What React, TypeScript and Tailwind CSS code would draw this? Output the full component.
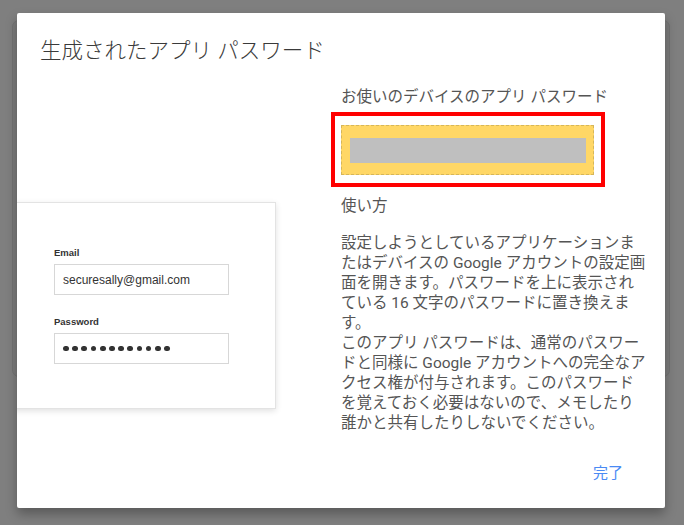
export default function App() {
  const lines1 = [
    "設定しようとしているアプリケーションま",
    "たはデバイスの Google アカウントの設定画",
    "面を開きます。パスワードを上に表示され",
    "ている 16 文字のパスワードに置き換えま",
    "す。",
    "このアプリ パスワードは、通常のパスワー",
    "ドと同様に Google アカウントへの完全なア",
    "クセス権が付与されます。このパスワード",
    "を覚えておく必要はないので、メモしたり",
    "誰かと共有したりしないでください。",
  ];
  return (
    <div className="relative w-[684px] h-[525px] overflow-hidden bg-[#7f7f7f] font-['Roboto','Noto_Sans_CJK_JP',sans-serif]">
      <div className="absolute left-[12px] top-[20px] w-[658px] h-[357px] rounded-[7px] border border-[#737373] bg-[#7c7c7c]" />
      <div className="relative ml-[17px] mt-[13px] w-[648px] h-[495px] bg-white rounded-[2px] shadow-[0_6px_12px_rgba(0,0,0,0.3)] overflow-hidden flex flex-col">
        <div className="pl-[23px] pt-[24px] text-[21.5px] leading-[28px] font-light text-[#3a3a3a] whitespace-nowrap">
          生成されたアプリ パスワード
        </div>
        <div className="flex mt-[22px]">
          <div className="w-[324px] shrink-0">
            <div className="ml-[-40px] mt-[115px] w-[299px] h-[207px] bg-white border border-[#e3e3e3] shadow-[0_2px_6px_rgba(0,0,0,0.12)] pl-[76px] pt-[44px] font-['Liberation_Sans','Roboto',sans-serif]">
              <div className="text-[9.5px] leading-[12px] font-bold text-[#333]">Email</div>
              <div className="mt-[5px] w-[175px] h-[31px] border border-[#d7d7d7] flex items-center pl-[8px] text-[12px] text-[#333]">
                securesally@gmail.com
              </div>
              <div className="mt-[21px] text-[9.5px] leading-[12px] font-bold text-[#333]">Password</div>
              <div className="mt-[5px] w-[175px] h-[31px] border border-[#d7d7d7] flex items-center pl-[8px] gap-[3.4px]">
                {Array.from({ length: 12 }).map((_, i) => (
                  <span key={i} className="w-[5.8px] h-[5.8px] rounded-full bg-[#333]" />
                ))}
              </div>
            </div>
          </div>
          <div className="flex-1 text-[15.5px] text-[#555] whitespace-nowrap">
            <div className="leading-[20px]">お使いのデバイスのアプリ パスワード</div>
            <div className="ml-[-10px] mt-[5px] w-[274px] h-[75px] border-4 border-[#ff0000] pl-[6px] pt-[9px]">
              <div className="w-[253px] h-[50px] bg-[#ffd766] border border-dashed border-[#d6b65a] pl-[8px] pt-[12px]">
                <div className="w-[236px] h-[25px] bg-[#bfbfbf]" />
              </div>
            </div>
            <div className="mt-[8.5px] leading-[20px]">使い方</div>
            <div className="mt-[17.5px] leading-[20px]">
              {lines1.map((l, i) => (
                <div key={i}>{l}</div>
              ))}
            </div>
          </div>
        </div>
        <div className="mt-auto flex justify-end pr-[42px] pb-[25px]">
          <span className="text-[15px] leading-[20px] text-[#4a8af4]">完了</span>
        </div>
      </div>
    </div>
  );
}
